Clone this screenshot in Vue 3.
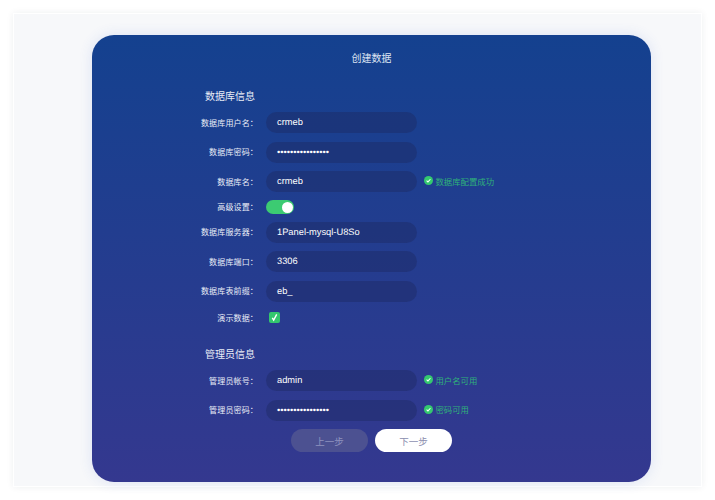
<script setup>
const dbRows = [
  { label: '数据库用户名：', value: 'crmeb' },
  { label: '数据库密码：', value: '••••••••••••••••' },
  { label: '数据库名：', value: 'crmeb', tip: '数据库配置成功' },
]
const connRows = [
  { label: '数据库服务器：', value: '1Panel-mysql-U8So' },
  { label: '数据库端口：', value: '3306' },
  { label: '数据库表前缀：', value: 'eb_' },
]
const adminRows = [
  { label: '管理员帐号：', value: 'admin', tip: '用户名可用' },
  { label: '管理员密码：', value: '••••••••••••••••', tip: '密码可用' },
]
</script>

<template>
  <div class="page">
    <div class="window">
      <main class="card">
        <h1 class="title">创建数据</h1>
        <h2 class="heading">数据库信息</h2>
        <div v-for="r in dbRows" :key="r.label" class="row">
          <span class="label">{{ r.label }}</span>
          <div class="field">{{ r.value }}</div>
          <span v-if="r.tip" class="tip">
            <svg class="ok" viewBox="0 0 16 16"><circle cx="8" cy="8" r="8" fill="#34c96f" /><path d="M4.6 8.3 7 10.6l4.4-4.8" fill="none" stroke="#fff" stroke-width="1.8" /></svg>
            {{ r.tip }}
          </span>
        </div>
        <div class="row switch-row">
          <span class="label">高级设置：</span>
          <span class="switch"><span class="knob"></span></span>
        </div>
        <div v-for="r in connRows" :key="r.label" class="row">
          <span class="label">{{ r.label }}</span>
          <div class="field">{{ r.value }}</div>
        </div>
        <div class="row check-row">
          <span class="label">演示数据：</span>
          <span class="check">
            <svg viewBox="0 0 12 12"><path d="M3.6 6.4 5.1 8.8 8.4 2.6" fill="none" stroke="#fff" stroke-width="1.5" /></svg>
          </span>
        </div>
        <h2 class="heading admin">管理员信息</h2>
        <div v-for="r in adminRows" :key="r.label" class="row">
          <span class="label">{{ r.label }}</span>
          <div class="field">{{ r.value }}</div>
          <span class="tip">
            <svg class="ok" viewBox="0 0 16 16"><circle cx="8" cy="8" r="8" fill="#34c96f" /><path d="M4.6 8.3 7 10.6l4.4-4.8" fill="none" stroke="#fff" stroke-width="1.8" /></svg>
            {{ r.tip }}
          </span>
        </div>
        <div class="actions">
          <button class="btn prev">上一步</button>
          <button class="btn next">下一步</button>
        </div>
      </main>
    </div>
  </div>
</template>

<style>
html, body { margin: 0; background: #fff; }
</style>

<style scoped>
.page {
  width: 715px;
  height: 500px;
  box-sizing: border-box;
  padding: 13px;
  overflow: hidden;
  font-family: "Noto Sans CJK SC", sans-serif;
}
.window {
  width: 689px;
  height: 474px;
  box-sizing: border-box;
  padding: 22px 51px 0 79px;
  background: #f7f8fa;
  border: 1px solid #fff;
  box-shadow: 0 0 7px rgba(30, 40, 60, 0.07);
}
.card {
  width: 559px;
  height: 447px;
  box-sizing: border-box;
  margin-top: -1px;
  margin-left: -1px;
  padding-top: 17px;
  border-radius: 22px;
  background: linear-gradient(180deg, #14418f 0%, #34388f 100%);
  box-shadow: 0 0 14px rgba(60, 100, 210, 0.14);
  color: #fff;
}
.title {
  margin: 0;
  height: 12px;
  line-height: 12px;
  text-align: center;
  font-size: 10px;
  font-weight: 400;
  color: #dfe5f3;
}
.heading {
  margin: 0 0 0 113px;
  padding-top: 26px;
  height: 18px;
  line-height: 12px;
  box-sizing: content-box;
  font-size: 10px;
  font-weight: 400;
  color: #e8ecf6;
}
.heading.admin {
  padding-top: 19px;
  height: 18px;
}
.row {
  display: flex;
  align-items: center;
  height: 29.5px;
}
.label {
  width: 166px;
  text-align: right;
  font-size: 8px;
  line-height: 12px;
  letter-spacing: 0.15px;
  color: #e9edf7;
  flex: none;
}
.field {
  width: 151px;
  height: 21px;
  margin-left: 8px;
  padding-left: 11px;
  box-sizing: border-box;
  border-radius: 11px;
  background: rgba(28, 40, 96, 0.42);
  font-family: "Liberation Sans", sans-serif;
  font-size: 9.3px;
  line-height: 21px;
  color: #fff;
  text-rendering: geometricPrecision;
  flex: none;
}
.tip {
  display: flex;
  align-items: center;
  gap: 2.5px;
  margin-left: 7px;
  margin-bottom: 2px;
  font-size: 8.4px;
  line-height: 12px;
  color: #2fb07a;
}
.ok { width: 9px; height: 9px; flex: none; }
.switch-row { height: 21px; }
.switch {
  position: relative;
  width: 28px;
  height: 14px;
  margin-left: 8px;
  border-radius: 7px;
  background: #3ccb72;
}
.knob {
  position: absolute;
  top: 1.5px;
  right: 1.5px;
  width: 11px;
  height: 11px;
  border-radius: 50%;
  background: #fff;
}
.check-row { height: 23px; }
.check {
  width: 11px;
  height: 11px;
  margin-left: 11px;
  border-radius: 2px;
  background: #33c66e;
}
.check svg { display: block; width: 11px; height: 11px; }
.actions {
  display: flex;
  justify-content: flex-start;
  gap: 7px;
  margin: 4px 0 0 199px;
}
.btn {
  width: 77px;
  height: 23px;
  padding: 0;
  border: 0;
  border-radius: 12px;
  font-family: inherit;
  font-size: 9.5px;
}
.prev { background: #4c5191; color: #8f93bf; }
.next { background: #fff; color: #8a8dae; }
</style>
